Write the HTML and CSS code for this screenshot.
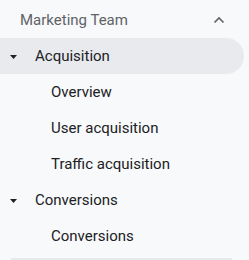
FILE: index.html
```html
<!DOCTYPE html>
<html lang="en">
<head>
    <meta charset="UTF-8">
    <title>Marketing Team</title>
    <link rel="stylesheet" href="styles.css">
</head>
<body>
    <nav class="nav">
        <div class="nav-header">
            <span>Marketing Team</span>
            <svg class="chevron" width="12" height="8" viewBox="0 0 12 8"><path d="M1.5 6.5 L6 2 L10.5 6.5" fill="none" stroke="#5f6368" stroke-width="1.6"/></svg>
        </div>
        <div class="group">
            <div class="group-title active">
                <svg class="caret" width="7" height="4" viewBox="0 0 7 4"><path d="M0 0 H7 L3.5 4 Z" fill="#202124"/></svg>
                <span>Acquisition</span>
            </div>
            <div class="item">Overview</div>
            <div class="item">User acquisition</div>
            <div class="item">Traffic acquisition</div>
        </div>
        <div class="group">
            <div class="group-title">
                <svg class="caret" width="7" height="4" viewBox="0 0 7 4"><path d="M0 0 H7 L3.5 4 Z" fill="#202124"/></svg>
                <span>Conversions</span>
            </div>
            <div class="item">Conversions</div>
        </div>
        <div class="divider"></div>
    </nav>
</body>
</html>
```

FILE: styles.css
```css
body {
    margin: 0;
    background: #f8f9fa;
    font-family: Roboto, "Noto Sans", sans-serif;
    font-size: 15px;
    color: #202124;
    overflow: hidden;
}
.nav {
    width: 244px;
}
.nav-header {
    height: 38px;
    display: flex;
    align-items: center;
    justify-content: space-between;
    padding: 2px 19px 0 20px;
    box-sizing: border-box;
    color: #5f6368;
}
.group-title {
    height: 36px;
    display: flex;
    align-items: center;
    padding-left: 10px;
    border-radius: 0 18px 18px 0;
}
.group-title.active {
    background: #e8eaed;
}
.caret {
    margin: 1px 18px 0 0;
}
.item {
    height: 36px;
    display: flex;
    align-items: center;
    padding-left: 51px;
}
.divider {
    margin: 4px 0 0 11px;
    width: 221px;
    height: 2px;
    background: #e8eaed;
}
```
